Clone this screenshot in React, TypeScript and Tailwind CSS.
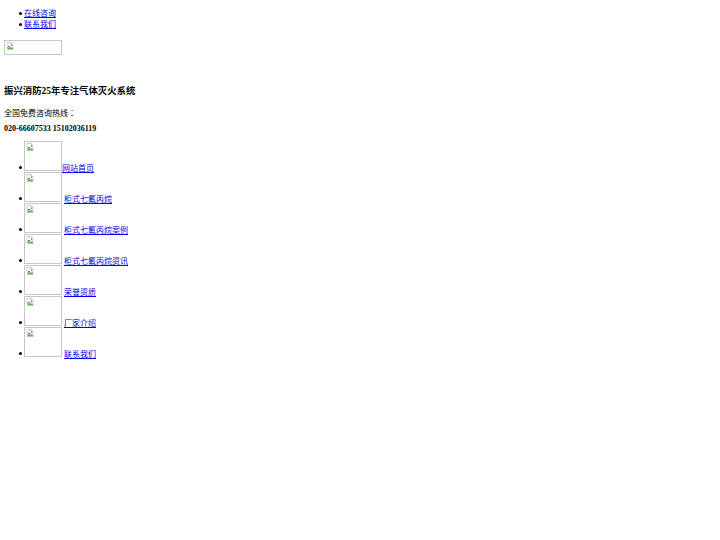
const topLinks = ['在线咨询', '联系我们'];

const navLinks = [
  '网站首页',
  '柜式七氟丙烷',
  '柜式七氟丙烷案例',
  '柜式七氟丙烷资讯',
  '荣誉资质',
  '厂家介绍',
  '联系我们',
];

// little "broken image" glyph, like the browser draws it
function BrokenIcon() {
  return (
    <svg width="8" height="8" viewBox="0 0 16 16" className="block">
      <path d="M2 1h8l4 4v5l-2 2-2-2-2 2-2-2-2 2-2-2z" fill="#fff" stroke="#9a9a9a" strokeWidth="1" />
      <path d="M10 1v4h4" fill="none" stroke="#9a9a9a" strokeWidth="1" />
      <path d="M3 11l3-3 3 3" fill="none" stroke="#4a9a3a" strokeWidth="2" />
      <path d="M2 14l4-3 3 2 3-2 3 3v1H2z" fill="#5aa84a" />
      <circle cx="11" cy="6.5" r="1.3" fill="#3a86c8" />
    </svg>
  );
}

function BrokenImage({ className }: { className: string }) {
  return (
    <span className={`inline-block border border-[#c6c6c6] bg-white pl-[1px] pt-[1px] ${className}`}>
      <BrokenIcon />
    </span>
  );
}

function Bullet({ className = '' }: { className?: string }) {
  return <span className={`inline-block w-[3px] h-[3px] rounded-full bg-black mr-[2px] ${className}`} />;
}

export default function App() {
  return (
    <div
      className="min-h-[540px] w-[720px] bg-white px-[4px] text-[8px] text-black"
      style={{ fontFamily: '"Liberation Serif", "Noto Sans CJK SC", serif' }}
    >
      <ul className="pt-[8px] pl-[15px]">
        {topLinks.map((t) => (
          <li key={t} className="flex items-center h-[11px] leading-[11px]">
            <Bullet />
            <a href="#" className="text-[#0000ee] underline">{t}</a>
          </li>
        ))}
      </ul>

      <div className="mt-[10px] h-[15px]">
        <BrokenImage className="w-[58px] h-[15px] align-top" />
      </div>

      <h2 className="mt-[30px] text-[9.4px] leading-[12px] font-bold">振兴消防25年专注气体灭火系统</h2>

      <p className="mt-[10px] h-[12px] leading-[12px]">
        全国免费咨询热线<span className="font-['Noto_Sans_CJK_TC',sans-serif]">：</span>
      </p>

      <p className="mt-[4px] leading-[12px] font-bold">020-66607533 15102036119</p>

      <ul className="mt-[6px] pl-[15px]">
        {navLinks.map((t, i) => (
          <li key={t} className="flex items-baseline h-[31px] leading-[11px]">
            <Bullet className="-translate-y-[2px]" />
            <BrokenImage className="w-[38px] h-[30px] shrink-0" />
            <a href="#" className={`text-[#0000ee] underline ${i === 0 ? '' : 'ml-[2px]'}`}>{t}</a>
          </li>
        ))}
      </ul>
    </div>
  );
}
